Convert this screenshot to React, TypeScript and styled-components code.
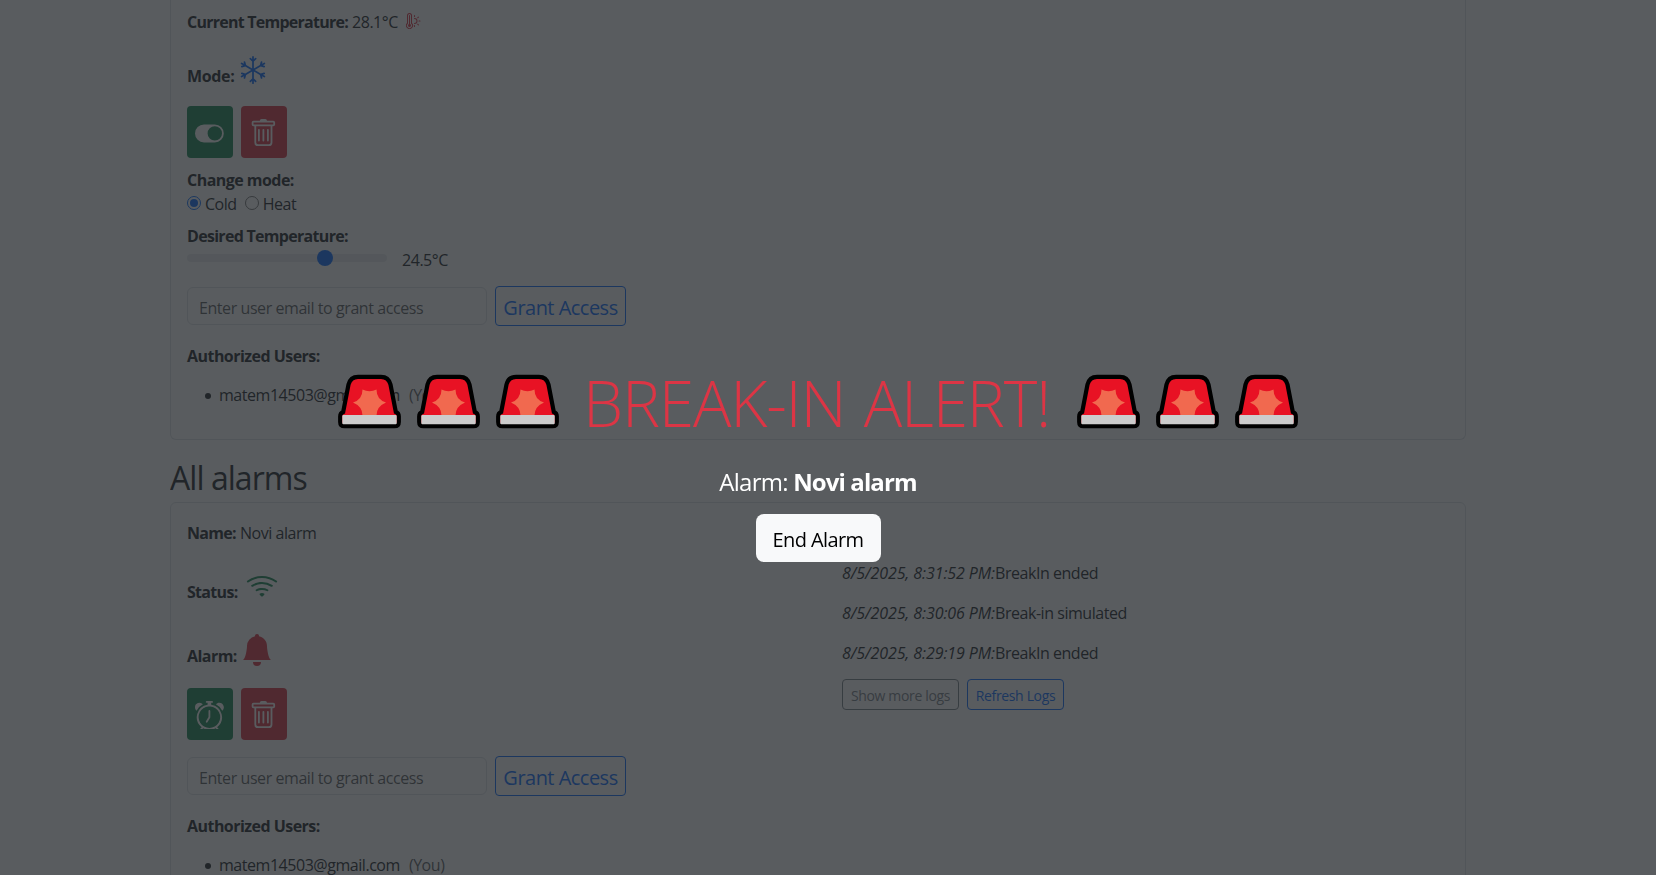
import React from "react";
import styled, { createGlobalStyle } from "styled-components";
import { BsAlarm, BsBellFill, BsSnow, BsThermometerSun, BsToggleOn, BsTrash, BsWifi } from "react-icons/bs";

const GlobalStyle = createGlobalStyle`
  *, *::before, *::after { box-sizing: border-box; }
  html, body { margin: 0; height: 875px; overflow: hidden; }
  body {
    font: 430 16px/24px "Open Sans", "Noto Sans", sans-serif;
    letter-spacing: -0.46px;
    color: #212529;
    background: #fff;
  }
  svg { display: block; }
`;

const Page = styled.main`
  width: 1296px;
  margin-left: 170px;
  height: 875px;
  overflow: hidden;
`;

const Card = styled.section<{ $clipped?: boolean }>`
  border: 1px solid #dee2e6;
  border-top-width: ${(p) => (p.$clipped ? 0 : 1)}px;
  border-radius: ${(p) => (p.$clipped ? "0 0 6px 6px" : "6px")};
  padding: ${(p) => (p.$clipped ? 10 : 0)}px 16px 0;
  height: ${(p) => (p.$clipped ? 440 : 480)}px;
`;

const Columns = styled.div`
  display: grid;
  grid-template-columns: 655px 1fr;
`;

const Line = styled.div<{ $top?: number; $gap?: number; $height?: number }>`
  display: flex;
  align-items: flex-end;
  gap: ${(p) => p.$gap ?? 4}px;
  height: ${(p) => p.$height ?? 24}px;
  margin-top: ${(p) => p.$top ?? 0}px;
  white-space: nowrap;
`;

const Label = styled.strong<{ $spacing?: number }>`
  font-weight: 700;
  letter-spacing: ${(p) => p.$spacing ?? -0.54}px;
`;

const Icon = styled.span<{ $color: string; $size: number; $lift?: number; $left?: number }>`
  color: ${(p) => p.$color};
  font-size: ${(p) => p.$size}px;
  margin: 0 0 ${(p) => p.$lift ?? 0}px ${(p) => p.$left ?? 0}px;
`;

const Actions = styled.div<{ $top: number }>`
  display: flex;
  gap: 8px;
  margin-top: ${(p) => p.$top}px;
`;

const ActionButton = styled.button<{ $bg: string }>`
  display: grid;
  place-items: center;
  width: 46px;
  height: 52px;
  padding: 2px 1px 0 0;
  border: 0;
  border-radius: 4px;
  color: #fff;
  font-size: 28.8px;
  background: ${(p) => p.$bg};
`;

const Radio = styled.span<{ $checked?: boolean }>`
  display: grid;
  place-items: center;
  width: 14px;
  height: 14px;
  margin-bottom: 6px;
  border: 1px solid ${(p) => (p.$checked ? "#0d6efd" : "#767676")};
  border-radius: 50%;
  &::after {
    content: "";
    width: 8px;
    height: 8px;
    border-radius: 50%;
    background: ${(p) => (p.$checked ? "#0d6efd" : "transparent")};
  }
`;

const RadioText = styled.span<{ $after?: number }>`
  margin-right: ${(p) => p.$after ?? 0}px;
`;

const Track = styled.div`
  display: flex;
  align-items: center;
  width: 200px;
  height: 8px;
  margin-bottom: 10px;
  padding-left: 130px;
  border-radius: 8px;
  background: #e9ecef;
`;

const Thumb = styled.span`
  width: 16px;
  height: 16px;
  border-radius: 50%;
  background: #0d6efd;
`;

const Grant = styled.div<{ $top: number }>`
  display: flex;
  align-items: center;
  gap: 8px;
  margin-top: ${(p) => p.$top}px;
`;

const EmailInput = styled.input`
  width: 300px;
  height: 38px;
  padding: 3px 12px 0 11px;
  border: 1px solid #dee2e6;
  border-radius: 6px;
  font: inherit;
  letter-spacing: -0.43px;
  &::placeholder { color: rgba(33, 37, 41, 0.75); opacity: 1; }
`;

const OutlineButton = styled.button<{ $color: string; $w: number; $h: number; $font: number; $spacing: number; $muted?: boolean }>`
  width: ${(p) => p.$w}px;
  height: ${(p) => p.$h}px;
  padding: 2px 0 0;
  border: 1px solid ${(p) => p.$color};
  border-radius: 4px;
  background: transparent;
  color: ${(p) => p.$color};
  font: 430 ${(p) => p.$font}px "Open Sans", sans-serif;
  letter-spacing: ${(p) => p.$spacing}px;
  white-space: nowrap;
  opacity: ${(p) => (p.$muted ? 0.9 : 1)};
`;

const Users = styled.ul`
  margin: 15px 0 0;
  padding: 0;
  list-style: none;
`;

const User = styled.li`
  display: flex;
  align-items: center;
  padding-left: 18px;
  &::before {
    content: "";
    width: 6px;
    height: 6px;
    margin: 2px 8px 0 0;
    border-radius: 50%;
    background: #212529;
  }
`;

const You = styled.span`
  margin-left: 9px;
  color: rgba(33, 37, 41, 0.75);
`;

const Heading = styled.h2`
  margin: 19px 0 5px;
  height: 38px;
  font-size: 32px;
  line-height: 38px;
  font-weight: 400;
  letter-spacing: -0.95px;
`;

const Logs = styled.div`
  display: flex;
  flex-direction: column;
  gap: 16px;
  padding-top: 58px;
`;

const LogLine = styled.div`
  white-space: nowrap;
  em { letter-spacing: -0.09px; }
`;

const LogButtons = styled.div`
  display: flex;
  gap: 8px;
  margin-top: -2px;
`;

const Overlay = styled.div`
  position: fixed;
  inset: 0;
  display: flex;
  flex-direction: column;
  align-items: center;
  padding: 374px 20px 0 0;
  background: rgba(33, 37, 41, 0.75);
`;

const AlertTitle = styled.h1`
  display: flex;
  align-items: flex-start;
  height: 55px;
  margin: 0;
  color: #dc3545;
  font-size: 64px;
  line-height: 53px;
  font-weight: 300;
`;

const Sirens = styled.span`
  display: flex;
  gap: 16px;
`;

const AlertText = styled.span`
  width: 464px;
  margin: 2px 30px 0 24px;
  letter-spacing: -1.2px;
  word-spacing: 3px;
  white-space: nowrap;
`;

const AlarmName = styled.p`
  margin: 35px 0 0;
  height: 36px;
  color: #fff;
  font-size: 24px;
  line-height: 36px;
  letter-spacing: -0.75px;
`;

const EndButton = styled.button`
  width: 125px;
  height: 48px;
  margin-top: 14px;
  padding: 2px 0 0;
  border: 0;
  border-radius: 8px;
  background: #f8f9fa;
  color: #000;
  font: 430 20px "Open Sans", sans-serif;
  letter-spacing: -0.6px;
  white-space: nowrap;
`;

const Siren = () => (
  <svg width="63" height="55" viewBox="0 -0.5 63 55">
    <path d="M20 2.3H43Q50.500 2.300 52.500 10L57.800 37.500Q60.800 38.500 60.800 42V47.500Q60.800 51.700 56.500 51.700H6.500Q2.200 51.700 2.200 47.500V42Q2.200 38.500 5.200 37.500L10.500 10Q12.500 2.300 20 2.300Z" fill="#e81224" stroke="#000" strokeWidth="4.2" />
    <path d="M24.500 15Q31.500 18.500 38.500 15Q38.500 25 48 28Q38.500 32 38.500 41H24.500Q24.500 32 15 28Q24.500 25 24.500 15Z" fill="#f1694f" />
    <rect x="4.300" y="40.500" width="54.400" height="9.200" rx="1" fill="#ccc" />
  </svg>
);

const SirenGroup = () => (
  <Sirens>
    <Siren />
    <Siren />
    <Siren />
  </Sirens>
);

const AccessForm = ({ top }: { top: number }) => (
  <>
    <Grant $top={top}>
      <EmailInput placeholder="Enter user email to grant access" />
      <OutlineButton $color="#0d6efd" $w={131} $h={40} $font={20} $spacing={-0.52}>Grant Access</OutlineButton>
    </Grant>
    <Line $top={18}>
      <Label>Authorized Users:</Label>
    </Line>
    <Users>
      <User>matem14503@gmail.com<You>(You)</You></User>
    </Users>
  </>
);

export default function App() {
  return (
    <>
      <GlobalStyle />
      <Page>
        <Card $clipped>
          <Line>
            <Label $spacing={-0.75}>Current Temperature:</Label>
            <span>28.1°C</span>
            <Icon $color="#dc3545" $size={16} $lift={5} $left={4}><BsThermometerSun /></Icon>
          </Line>
          <Line $top={16} $height={38} $gap={5}>
            <Label $spacing={-0.35}>Mode:</Label>
            <Icon $color="#0d6efd" $size={28} $lift={4}><BsSnow /></Icon>
          </Line>
          <Actions $top={18}>
            <ActionButton $bg="#198754"><BsToggleOn /></ActionButton>
            <ActionButton $bg="#dc3545"><BsTrash /></ActionButton>
          </Actions>
          <Line $top={10}><Label>Change mode:</Label></Line>
          <Line $gap={4}>
            <Radio $checked />
            <RadioText $after={4}>Cold</RadioText>
            <Radio />
            <RadioText>Heat</RadioText>
          </Line>
          <Line $top={8}><Label $spacing={-0.7}>Desired Temperature:</Label></Line>
          <Line $gap={15}>
            <Track><Thumb /></Track>
            <span>24.5°C</span>
          </Line>
          <AccessForm top={14} />
        </Card>
        <Heading>All alarms</Heading>
        <Card>
          <Columns>
            <div>
              <Line $top={18}>
                <Label $spacing={-0.7}>Name:</Label>
                <span>Novi alarm</span>
              </Line>
              <Line $top={16} $height={43}>
                <Label $spacing={-0.7}>Status:</Label>
                <Icon $color="#198754" $size={32} $lift={2} $left={4}><BsWifi /></Icon>
              </Line>
              <Line $top={16} $height={48}>
                <Label>Alarm:</Label>
                <Icon $color="#dc3545" $size={32} $lift={2}><BsBellFill /></Icon>
              </Line>
              <Actions $top={20}>
                <ActionButton $bg="#198754"><BsAlarm /></ActionButton>
                <ActionButton $bg="#dc3545"><BsTrash /></ActionButton>
              </Actions>
              <AccessForm top={16} />
            </div>
            <Logs>
              <LogLine><em>8/5/2025, 8:31:52 PM:</em>BreakIn ended</LogLine>
              <LogLine><em>8/5/2025, 8:30:06 PM:</em>Break-in simulated</LogLine>
              <LogLine><em>8/5/2025, 8:29:19 PM:</em>BreakIn ended</LogLine>
              <LogButtons>
                <OutlineButton $color="#6c757d" $w={117} $h={31} $font={14} $spacing={-0.35} $muted>Show more logs</OutlineButton>
                <OutlineButton $color="#0d6efd" $w={97} $h={31} $font={14} $spacing={-0.35}>Refresh Logs</OutlineButton>
              </LogButtons>
            </Logs>
          </Columns>
        </Card>
      </Page>
      <Overlay>
        <AlertTitle>
          <SirenGroup />
          <AlertText>BREAK-IN ALERT!</AlertText>
          <SirenGroup />
        </AlertTitle>
        <AlarmName>Alarm: <Label $spacing={-0.9}>Novi alarm</Label></AlarmName>
        <EndButton>End Alarm</EndButton>
      </Overlay>
    </>
  );
}
